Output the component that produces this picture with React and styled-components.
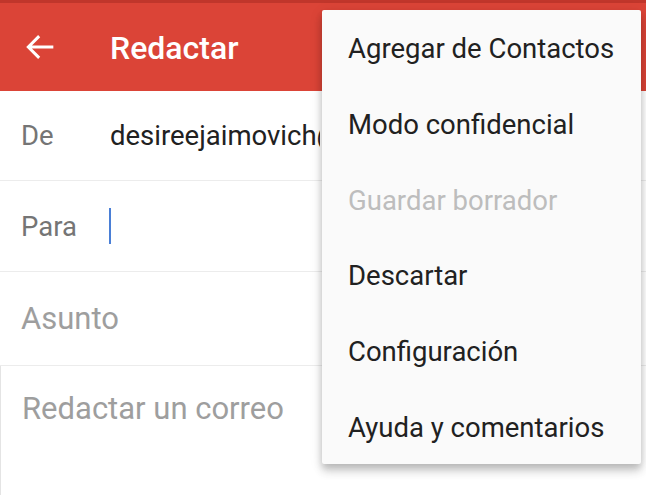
import React from "react";
import styled, { createGlobalStyle } from "styled-components";

const Global = createGlobalStyle`
  html, body { margin: 0; padding: 0; background: #ffffff; }
  body { font-family: Roboto, "Noto Sans", Arial, sans-serif; }
`;

const Screen = styled.div`
  position: relative;
  width: 646px;
  height: 495px;
  overflow: hidden;
  background: #ffffff;
  display: flex;
  flex-direction: column;
`;

const StatusStrip = styled.div`
  height: 3px;
  background: #c0362b;
`;

const AppBar = styled.header`
  height: 88px;
  background: #db4437;
  display: flex;
  align-items: center;
  padding-left: 20px;
  box-sizing: border-box;
`;

const BackIcon = styled.svg`
  width: 40px;
  height: 40px;
  fill: none;
  stroke: #ffffff;
  stroke-width: 1.8;
  flex: none;
`;

const Title = styled.h1`
  margin: 0 0 0 50px;
  font-size: 32px;
  font-weight: 500;
  color: #ffffff;
  line-height: 1;
  padding-top: 2px;
`;

const Field = styled.div`
  height: ${(p) => p.$h}px;
  display: flex;
  align-items: center;
  padding-left: 21px;
  border-bottom: 1px solid #ececec;
  font-size: ${(p) => p.$size || 27.5}px;
  white-space: nowrap;
  overflow: hidden;
`;

const Label = styled.span`
  width: 89px;
  flex: none;
  color: #757575;
`;

const Value = styled.span`
  display: block;
  max-width: 210px;
  overflow: hidden;
  color: #212121;
`;

const Placeholder = styled.span`
  color: #9e9e9e;
`;

const Caret = styled.span`
  display: block;
  width: 2px;
  height: 36px;
  background: #4a7fd6;
  margin-left: -1px;
`;

const Body = styled.div`
  flex: 1;
  padding: 25px 0 0 21px;
  font-size: 31px;
  line-height: 36px;
  color: #9e9e9e;
  border-left: 1px solid #e4e4e4;
`;

const Menu = styled.ul`
  position: absolute;
  left: 322px;
  top: 10px;
  width: 319px;
  margin: 0;
  padding: 0;
  list-style: none;
  background: #fafafa;
  border-radius: 2px;
  box-shadow: 0 8px 10px rgba(0, 0, 0, 0.12), 0 3px 14px rgba(0, 0, 0, 0.1),
    0 4px 6px rgba(0, 0, 0, 0.12);
`;

const MenuItem = styled.li`
  height: 75.7px;
  display: flex;
  align-items: center;
  padding-left: 26px;
  padding-top: 2px;
  box-sizing: border-box;
  font-size: 27.5px;
  color: ${(p) => (p.$disabled ? "#bdbdbd" : "#212121")};
  white-space: nowrap;
`;

const items = [
  { label: "Agregar de Contactos" },
  { label: "Modo confidencial" },
  { label: "Guardar borrador", disabled: true },
  { label: "Descartar" },
  { label: "Configuración" },
  { label: "Ayuda y comentarios" },
];

export default function App() {
  return (
    <Screen>
      <Global />
      <StatusStrip />
      <AppBar>
        <BackIcon viewBox="0 0 24 24">
          <path d="M20 12H5M11.5 5.5L5 12l6.5 6.5" />
        </BackIcon>
        <Title>Redactar</Title>
      </AppBar>
      <Field $h={89}>
        <Label>De</Label>
        <Value>desireejaimovich@gmail.com</Value>
      </Field>
      <Field $h={90}>
        <Label>Para</Label>
        <Caret />
      </Field>
      <Field $h={93} $size={31}>
        <Placeholder>Asunto</Placeholder>
      </Field>
      <Body>Redactar un correo</Body>
      <Menu>
        {items.map((it) => (
          <MenuItem key={it.label} $disabled={it.disabled}>
            {it.label}
          </MenuItem>
        ))}
      </Menu>
    </Screen>
  );
}
